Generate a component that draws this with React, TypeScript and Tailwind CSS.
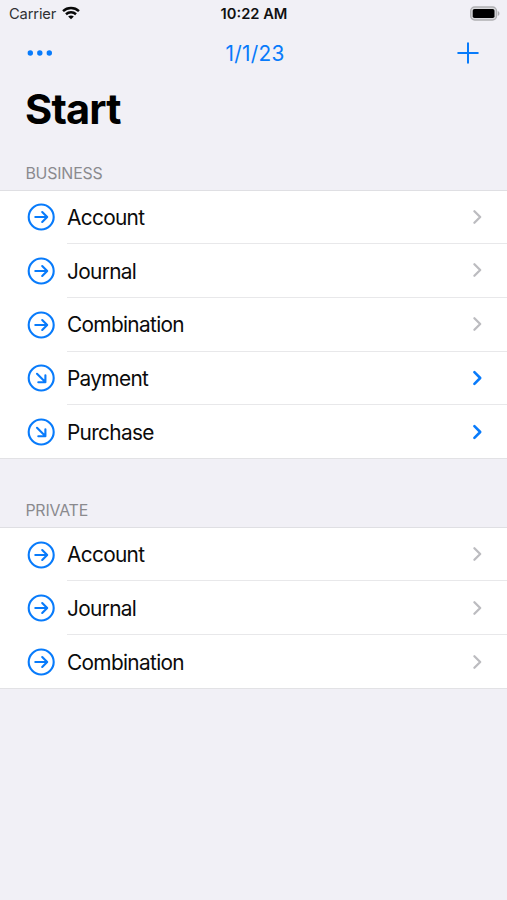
type RowData = { label: string; diagonal?: boolean };

const business: RowData[] = [
  { label: "Account" },
  { label: "Journal" },
  { label: "Combination" },
  { label: "Payment", diagonal: true },
  { label: "Purchase", diagonal: true },
];

const personal: RowData[] = [{ label: "Account" }, { label: "Journal" }, { label: "Combination" }];

function CircleArrow({ diagonal }: { diagonal?: boolean }) {
  return (
    <svg className="h-7 w-7 shrink-0" viewBox="0 0 28 28" fill="none" stroke="#087bfb" strokeWidth="2.1" strokeLinecap="round" strokeLinejoin="round">
      <circle cx="14.2" cy="14" r="12.5" />
      {diagonal ? <path d="M10 9.8L18 17.8M11.3 18.3H18.4V11.2" /> : <path d="M8.3 14H20M15.2 9L20.2 14L15.2 19" />}
    </svg>
  );
}

function Row({ label, diagonal, last }: RowData & { last: boolean }) {
  return (
    <li className={`flex h-[53.75px] items-center pl-[27px] ${last ? "border-b border-[#e2e2e5]" : ""}`}>
      <CircleArrow diagonal={diagonal} />
      <div className={`ml-3 flex h-full flex-1 items-center justify-between pr-[24px] ${last ? "" : "border-b border-[#e8e8ea]"}`}>
        <span className="pt-[3.5px] text-[20.8px] leading-none tracking-[-0.66px] text-[#0b0b0b]">{label}</span>
        <svg className="h-4 w-[11px]" viewBox="0 0 11 16" fill="none" stroke={diagonal ? "#087bfb" : "#bcbcc0"} strokeWidth={diagonal ? 2.6 : 2.3} strokeLinecap="round" strokeLinejoin="round">
          <path d="M2.4 2.2L8.2 8L2.4 13.8" />
        </svg>
      </div>
    </li>
  );
}

function Section({ title, rows }: { title: string; rows: RowData[] }) {
  return (
    <section>
      <h2 className="flex h-[35px] items-center pl-[25.4px] pt-[2px] text-[15.9px] leading-none tracking-[-0.18px] text-[#8a8a8e]">{title}</h2>
      <ul className="border-t border-[#dfdfe3] bg-white [&>li:first-child]:-mt-[0.75px]">
        {rows.map((row, i) => (
          <Row key={row.label} {...row} last={i === rows.length - 1} />
        ))}
      </ul>
    </section>
  );
}

export default function App() {
  return (
    <main className="h-[900px] w-full overflow-hidden bg-[#f1f0f6] font-['Inter',sans-serif]">
      <div className="grid h-[28px] grid-cols-3 items-center pl-[9px] pr-[7px] leading-none">
        <div className="flex items-center gap-[6px]">
          <span className="text-[14.7px] tracking-[-0.15px] text-[#303033]">Carrier</span>
          <svg className="-mt-[2px] h-[14px] w-[18px]" viewBox="0 0 19 14" fill="none" stroke="#080808" strokeWidth="2.6">
            <path d="M1.1 5.1C5.8 .7 13.2 .7 17.9 5.1" />
            <path d="M4.2 8.3C7.2 5.6 11.8 5.6 14.8 8.3" />
            <path d="M9.5 13.6L6.5 10.6C8.1 9.2 10.9 9.2 12.5 10.6Z" fill="#080808" stroke="none" />
          </svg>
        </div>
        <span className="-ml-px text-center text-[14.7px] font-semibold text-[#101011]">10:22 AM</span>
        <svg className="-mt-[2px] h-[15px] w-[31px] justify-self-end" viewBox="0 0 31 15">
          <rect x="1.7" y="1" width="25.8" height="13" rx="4" fill="#d9d9dc" stroke="#b0b0b3" strokeWidth="1.4" />
          <rect x="3.7" y="3" width="21.8" height="9" rx="1.8" fill="#000" />
          <path d="M28.8 5C31 5.8 31 9.2 28.8 10Z" fill="#acacaf" />
        </svg>
      </div>
      <nav className="flex h-[49px] items-center justify-between pl-[27px] pr-[28px]">
        <svg className="h-[6px] w-[26px]" viewBox="0 0 26 6" fill="#087bfb">
          <circle cx="3.3" cy="3" r="2.7" />
          <circle cx="12.8" cy="3" r="2.7" />
          <circle cx="22.3" cy="3" r="2.7" />
        </svg>
        <span className="pt-[3px] text-[20.8px] leading-none tracking-[0.3px] text-[#087bfb]">1/1/23</span>
        <svg className="h-[22px] w-[22px]" viewBox="0 0 22 22" stroke="#087bfb" strokeWidth="2" strokeLinecap="round">
          <path d="M1.2 11H20.8M11 1.2V20.8" />
        </svg>
      </nav>
      <h1 className="flex h-[64px] items-center pl-[25px] pt-[2px] text-[41.6px] font-bold leading-none tracking-[-0.85px] text-black">Start</h1>
      <div className="flex flex-col gap-[33.4px] pt-[14px]">
        <Section title="BUSINESS" rows={business} />
        <Section title="PRIVATE" rows={personal} />
      </div>
    </main>
  );
}
